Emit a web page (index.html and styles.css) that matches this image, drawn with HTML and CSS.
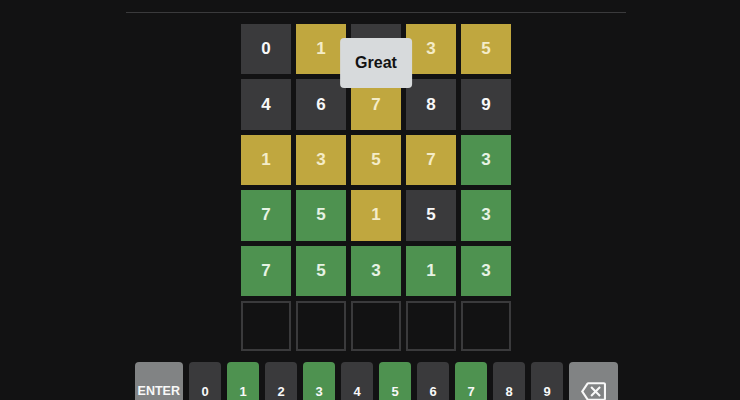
FILE: index.html
```html
<!DOCTYPE html>
<html lang="en">
<head>
    <meta charset="UTF-8">
    <meta name="viewport" content="width=device-width, initial-scale=1.0">
    <title>Numberle</title>
    <link rel="stylesheet" href="styles.css">
</head>
<body>
    <div class="page">
        <div class="app">
            <div class="header"></div>

            <div class="board-area">
                <div class="board">
                    <div class="toast">Great</div>

                    <div class="tile absent">0</div>
                    <div class="tile present">1</div>
                    <div class="tile absent"></div>
                    <div class="tile present">3</div>
                    <div class="tile present">5</div>

                    <div class="tile absent">4</div>
                    <div class="tile absent">6</div>
                    <div class="tile present">7</div>
                    <div class="tile absent">8</div>
                    <div class="tile absent">9</div>

                    <div class="tile present">1</div>
                    <div class="tile present">3</div>
                    <div class="tile present">5</div>
                    <div class="tile present">7</div>
                    <div class="tile correct">3</div>

                    <div class="tile correct">7</div>
                    <div class="tile correct">5</div>
                    <div class="tile present">1</div>
                    <div class="tile absent">5</div>
                    <div class="tile correct">3</div>

                    <div class="tile correct">7</div>
                    <div class="tile correct">5</div>
                    <div class="tile correct">3</div>
                    <div class="tile correct">1</div>
                    <div class="tile correct">3</div>

                    <div class="tile empty"></div>
                    <div class="tile empty"></div>
                    <div class="tile empty"></div>
                    <div class="tile empty"></div>
                    <div class="tile empty"></div>
                </div>
            </div>

            <div class="keyboard">
                <button class="key wide">ENTER</button>
                <button class="key">0</button>
                <button class="key correct">1</button>
                <button class="key">2</button>
                <button class="key correct">3</button>
                <button class="key">4</button>
                <button class="key correct">5</button>
                <button class="key">6</button>
                <button class="key correct">7</button>
                <button class="key">8</button>
                <button class="key">9</button>
                <button class="key wide" aria-label="backspace">
                    <svg viewBox="0 0 24 24" width="25" height="25">
                        <path fill="currentColor" d="M22 3H7c-.69 0-1.23.35-1.590.88L0 12l5.41 8.11c.36.53.9.89 1.59.89h15c1.1 0 2-.9 2-2V5c0-1.1-.9-2-2-2zm0 16H7.07L2.4 12l4.66-7H22v14zm-11.59-2L14 13.41 17.59 17 19 15.59 15.41 12 19 8.41 17.59 7 14 10.59 10.41 7 9 8.41 12.59 12 9 15.59z"/>
                    </svg>
                </button>
            </div>
        </div>
    </div>
</body>
</html>
```

FILE: styles.css
```css
body {
    margin: 0;
    background-color: #121213;
    font-family: 'Liberation Sans', Arial, sans-serif;
    color: #f8f8f8;
    overflow: hidden;
}

.page {
    padding-left: 12px;
}

.app {
    width: 500px;
    margin: 0 auto;
}

.header {
    height: 12px;
    border-bottom: 1px solid #3a3a3c;
}

.board-area {
    display: flex;
    justify-content: center;
    padding-top: 11px;
}

.board {
    position: relative;
    display: grid;
    grid-template-columns: repeat(5, 50px);
    grid-template-rows: repeat(6, 50.4px);
    gap: 5px;
}

.tile {
    display: flex;
    justify-content: center;
    align-items: center;
    font-size: 17px;
    font-weight: bold;
    color: #f8f8f8;
    box-sizing: border-box;
}

.tile.absent {
    background: #3a3a3c;
}

.tile.present {
    background: #c0a73f;
    color: #f4ecc8;
}

.tile.correct {
    background: #4e9250;
    color: #e6f2e4;
}

.tile.empty {
    border: 2px solid #3a3a3c;
}

.toast {
    position: absolute;
    top: 14px;
    left: 50%;
    transform: translateX(-50%);
    padding: 16px 15px;
    line-height: 18px;
    font-size: 16px;
    font-weight: bold;
    color: #121213;
    background: #d7dadc;
    border-radius: 4px;
    z-index: 2;
}

.keyboard {
    display: flex;
    justify-content: center;
    gap: 6px;
    margin-top: 11px;
}

.key {
    width: 32px;
    height: 58px;
    padding: 0;
    display: flex;
    justify-content: center;
    align-items: center;
    font-family: inherit;
    font-size: 13px;
    font-weight: bold;
    color: #f8f8f8;
    background: #3a3a3c;
    border: none;
    border-radius: 4px;
    cursor: pointer;
}

.key.wide {
    width: 48.5px;
    font-size: 12.5px;
    background: #818384;
}

.key.correct {
    background: #4e9250;
}
```
